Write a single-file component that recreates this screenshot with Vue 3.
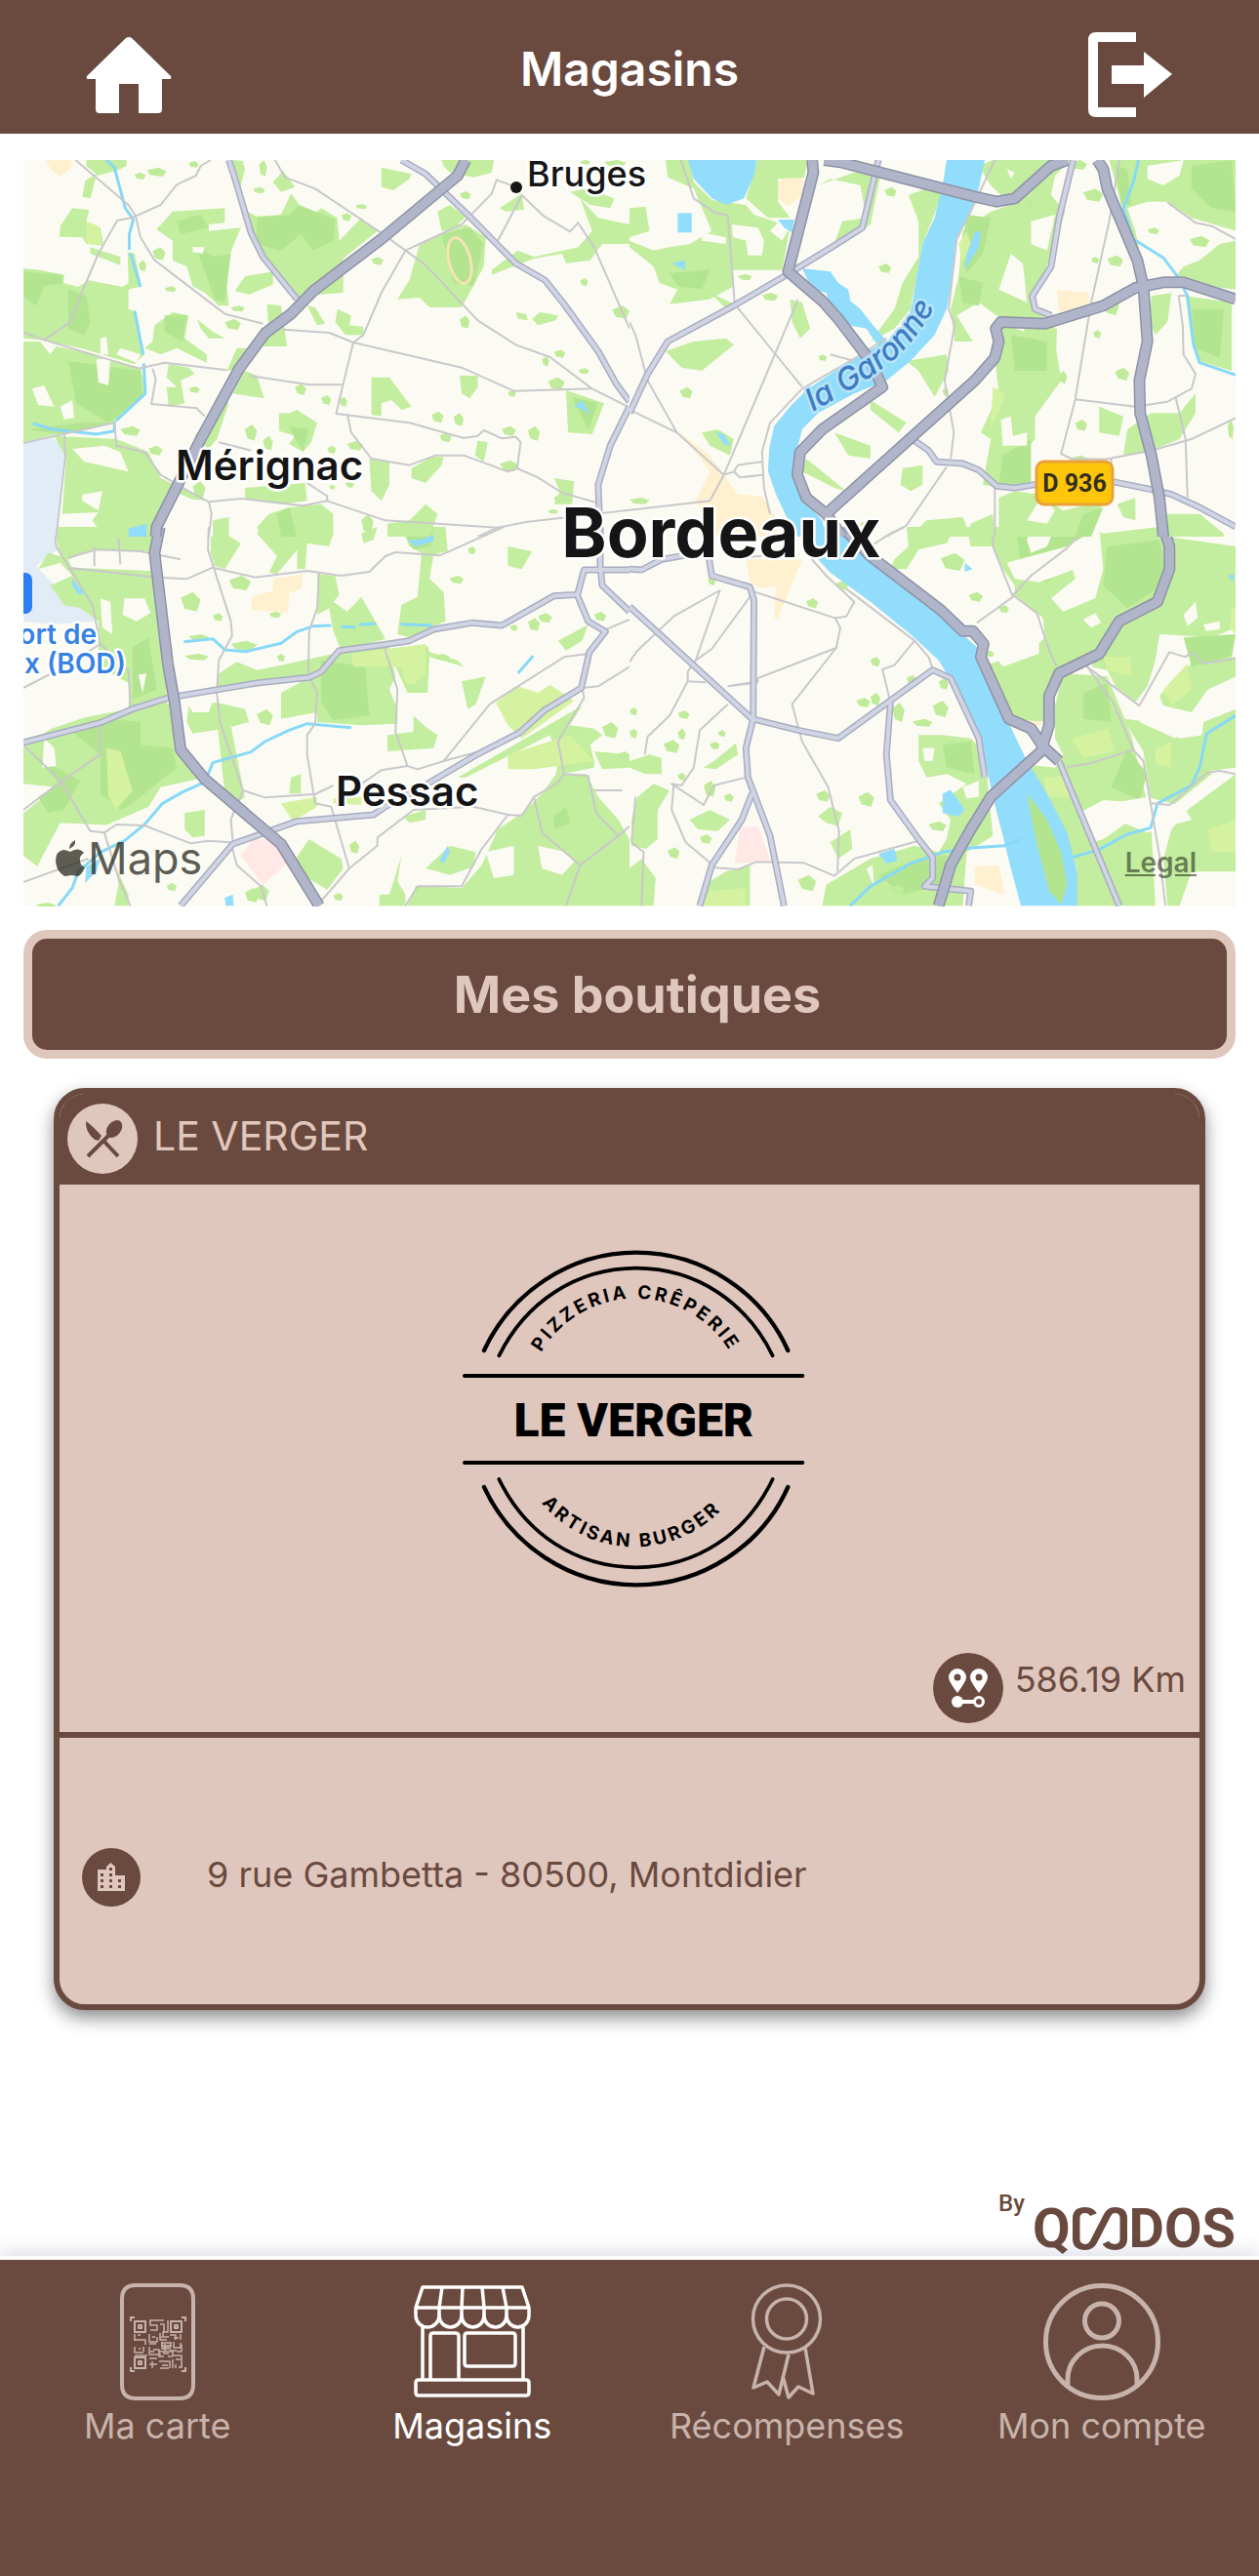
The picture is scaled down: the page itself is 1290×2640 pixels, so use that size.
<template>
  <div class="page">
    <header class="topbar">
      <button type="button" class="iconBtn" aria-label="Accueil">
        <svg viewBox="0 0 88 78" width="88" height="78">
          <path fill="#fff" d="M41 1Q44-1 47 1L87 40Q88 43 86 43H78V74Q78 78 74 78H54V48H34V78H14Q10 78 10 74V43H2Q0 43 1 40Z" />
        </svg>
      </button>
      <h1>Magasins</h1>
      <button type="button" class="iconBtn" aria-label="Déconnexion">
        <svg viewBox="0 0 88 88" width="88" height="88">
          <path fill="#fff" d="M50 0V10H11V77H50V87H9Q1 87 1 79V8Q1 0 9 0ZM25 34H58V20L87 43L58 67V53H25Z" />
        </svg>
      </button>
    </header>

    <main>
      <section class="map" aria-label="Carte">
        <svg class="mapDrawing" viewBox="24 164 1242 765">
          <rect x="24" y="164" width="1242" height="765" fill="#fcfbf3" />
          <svg
            v-for="tile in tiles"
            :key="tile.id"
            :x="tile.x"
            :y="tile.y"
            width="645"
            height="400"
            viewBox="0 0 1568 1200"
            preserveAspectRatio="none"
          >
            <polygon v-for="p in tile.yellow" :key="p" :points="p" fill="#fff0cf" />
            <polygon v-for="p in tile.pink" :key="p" :points="p" fill="#ffe8e6" />
            <polygon v-for="p in tile.airport" :key="p" :points="p" fill="#e2ecf7" />
            <polygon v-for="p in tile.green" :key="p" :points="p" fill="#c3ed9f" />
            <polygon v-for="p in tile.dark" :key="p" :points="p" fill="#b3e590" />
            <path :d="bushes(tile.bushes)" class="bush" />
            <polygon v-for="p in tile.lime" :key="p" :points="p" fill="#d4f2a0" />
            <polygon v-for="p in tile.holes" :key="p" :points="p" fill="#fcfbf3" />
            <polygon v-for="p in tile.water" :key="p" :points="p" fill="#92ddfb" />
            <polygon v-for="p in tile.island" :key="p" :points="p" fill="#b3e590" />
            <path v-for="d in tile.streams" :key="d" :d="d" class="line stream" />
            <path v-for="d in tile.minor" :key="d" :d="d" class="line minor" />
            <path v-for="d in tile.medium" :key="'c' + d" :d="d" class="line mediumCase" />
            <path v-for="d in tile.medium" :key="d" :d="d" class="line medium" />
            <path v-for="d in tile.major" :key="'c' + d" :d="d" class="line majorCase" />
            <path v-for="d in tile.major" :key="d" :d="d" class="line major" />
          </svg>

          <ellipse cx="471" cy="267" rx="11" ry="24" class="track" transform="rotate(-14 471 267)" />
          <circle cx="529" cy="192" r="6" fill="#151515" />
          <rect x="10" y="587" width="23" height="42" rx="7" fill="#2c7ff0" />
          <rect x="1062" y="473" width="78" height="44" rx="8" class="shield" />
          <text x="1101" y="504" class="shieldText">D 936</text>
          <path id="garonne" d="M833 422Q900 385 925 360T970 288" fill="none" />
          <text class="label river"><textPath href="#garonne">la Garonne</textPath></text>
          <text x="540" y="191" class="label village">Bruges</text>
          <text x="180" y="492" class="label town">Mérignac</text>
          <text x="344" y="826" class="label town">Pessac</text>
          <text x="739" y="571" class="label city">Bordeaux</text>
          <text x="99" y="660" class="label airportName">ort de</text>
          <text x="129" y="690" class="label airportName">x (BOD)</text>
        </svg>
        <span class="mapBrand">
          <svg viewBox="0 0 32 38" width="32" height="38">
            <path fill="currentColor" d="M21 0Q22 6 15 9Q15 3 21 0ZM16 12Q20 9 24 9.500Q28 10 30 13Q25 16 26 21Q26 26 31 28Q27 37 23 37Q20 36 16 36Q13 37 10 37Q2 32 1 22Q1 11 9 10Q12 10 16 12Z" />
          </svg>
          Maps
        </span>
        <a class="legal" href="#legal">Legal</a>
      </section>

      <button type="button" class="shopsBtn">Mes boutiques</button>

      <article class="shop">
        <div class="shopHead">
          <span class="badge light">
            <svg viewBox="0 0 72 72" width="72" height="72">
              <path fill="#6a4a3e" d="M19 18Q26 23 35 33L32 38L28 37Q18 29 19 18Z" />
              <ellipse cx="48" cy="26" rx="7" ry="10" fill="#6a4a3e" transform="rotate(38 48 26)" />
              <path d="M42 33L21 54M37 38L52 54" stroke="#6a4a3e" stroke-width="4" />
            </svg>
          </span>
          <h2>LE VERGER</h2>
        </div>

        <div class="shopMedia">
          <svg class="shopLogo" viewBox="0 0 1260 1200" width="420" height="400" role="img" aria-label="Le Verger">
            <g fill="none" stroke="#000" stroke-linecap="round">
              <path stroke-width="13" d="M168 402C250 225 430 101 636 101S1022 225 1102 402M168 822C250 1000 430 1123 636 1123S1022 1000 1102 822" />
              <path stroke-width="11" d="M214 418C295 255 450 149 636 149S975 255 1055 418M214 798C295 965 450 1069 636 1069S975 965 1055 798" />
              <path stroke-width="12" d="M108 480H1147M108 747H1147" />
            </g>
            <path id="arcTop" d="M338 418A337 337 0 0 1 930 418" fill="none" />
            <path id="arcBottom" d="M322 840A370 370 0 0 0 925 860" fill="none" />
            <text class="arcText"><textPath href="#arcTop" startOffset="50%">PIZZERIA CRÊPERIE</textPath></text>
            <text class="arcText"><textPath href="#arcBottom" startOffset="50%">ARTISAN BURGER</textPath></text>
            <text x="628" y="666" class="logoName">LE VERGER</text>
          </svg>
          <p class="distance">
            <span class="badge">
              <svg viewBox="0 0 72 72" width="72" height="72">
                <path fill="#fff" fill-rule="evenodd" d="M25 41Q16 29 16 25A9 9 0 0 1 34 25Q34 29 25 41ZM25 21.500A3.500 3.500 0 1 0 25 28.500A3.500 3.500 0 1 0 25 21.500ZM47 41Q38 29 38 25A9 9 0 0 1 56 25Q56 29 47 41ZM47 21.500A3.500 3.500 0 1 0 47 28.500A3.500 3.500 0 1 0 47 21.500Z" />
                <path d="M25 50H42" stroke="#fff" stroke-width="4" />
                <circle cx="25" cy="50" r="6" fill="#fff" />
                <circle cx="47" cy="50" r="4.500" fill="none" stroke="#fff" stroke-width="3" />
              </svg>
            </span>
            <span>586.19 Km</span>
          </p>
        </div>

        <div class="shopAddress">
          <span class="badge small">
            <svg viewBox="0 0 60 60" width="60" height="60">
              <path fill="#e0c7be" d="M16 44V22H25V19L29.500 15L34 19V28H44V44Z" />
              <path fill="#6a4a3e" d="M19 26h3v3h-3zM28 26h3v3h-3zM28 20h3v3h-3zM19 32h3v3h-3zM28 32h3v3h-3zM37 32h3v3h-3zM19 38h3v3h-3zM28 38h3v3h-3zM37 38h3v3h-3z" />
            </svg>
          </span>
          <address>9 rue Gambetta - 80500, Montdidier</address>
        </div>
      </article>

      <div class="brand">
        <small>By</small>
        <span class="brandName">
          Q<svg viewBox="0 0 60 58" width="56" height="44" preserveAspectRatio="none">
            <path fill="none" stroke="#6a4a3e" stroke-width="8" d="M23 10Q20 4 14 4Q4 4 4 15V43Q4 54 14 54Q20 54 23 47L38 11Q41 4 46 4Q56 4 56 15V43Q56 54 46 54Q40 54 36 48" />
          </svg>DOS
        </span>
      </div>
    </main>

    <nav class="tabs">
      <a v-for="tab in tabs" :key="tab.name" href="#" :class="['tab', { active: tab.active }]">
        <svg viewBox="0 0 120 120" width="120" height="120" fill="none" stroke="currentColor">
          <path v-for="s in tab.strokes" :key="s.d" :d="s.d" :stroke-width="s.w" stroke-linejoin="round" />
        </svg>
        <span>{{ tab.name }}</span>
      </a>
    </nav>
  </div>
</template>

<script setup>
// small clumps of trees, given as "x,y,w,h" boxes
const bushes = (list) =>
  list
    .split(" ")
    .map((b) => {
      const [x, y, w, h] = b.split(",").map(Number);
      return `M${x} ${y + h * 0.3}L${x + w * 0.6} ${y}L${x + w} ${y + h * 0.4}L${x + w * 0.8} ${y + h}L${x + w * 0.2} ${y + h * 0.85}Z`;
    })
    .join("");

const tiles = [
  {
    id: "sw",
    x: 0,
    y: 540,
    yellow: ["680,160 755,145 750,190 720,205 718,265 625,255 628,215 680,195"],
    pink: ["630,960 690,960 720,1030 655,1100 600,1010", "1220,1035 1270,1030 1260,1075 1225,1070"],
    airport: ["58,0 135,0 145,70 90,120 120,160 190,240 235,240 235,290 130,300 58,290"],
    green: [
      "135,0 395,0 375,80 390,160 415,330 415,540 440,560 450,690 510,770 400,800 370,860 240,930 200,950 100,1050 58,1010 58,880 140,800 58,790 58,680 150,600 320,560 320,480 245,430 245,290 200,250 160,240 125,180 180,150 150,110 95,130 120,80 150,90",
      "650,0 800,0 830,20 820,60 765,50 760,130 740,130 740,70 690,145 670,140 690,90 640,20",
      "525,30 560,20 600,50 560,130 535,120 525,80",
      "790,145 835,150 845,210 830,230 865,260 900,215 940,300 960,345 850,380 830,320 820,250 790,270",
      "1000,0 1110,0 1115,75 1080,85 1070,160 1105,200 1110,290 1070,310 1020,340 990,330 1000,240 1040,215 1050,80 1020,60",
      "540,455 590,415 640,440 700,425 850,385 880,390 870,420 780,455 640,485 540,500",
      "700,510 760,470 860,385 970,370 985,460 970,500 990,560 990,605 900,610 790,600 790,570 700,590",
      "470,550 540,540 610,560 620,600 560,620 480,635 465,600",
      "965,640 1030,630 1030,580 1060,615 1090,640 1080,680 965,690",
      "1000,370 1065,365 1070,385 1140,410 1155,430 1070,400 1065,510 1015,510 985,430",
      "1150,475 1210,460 1185,545 1165,560",
      "1390,350 1465,300 1450,350 1410,380",
      "1140,770 1450,550 1390,665 1400,760 1460,760 1490,830 1540,900 1568,960 1568,1165 1015,1165 1035,1105 1150,1110 1200,1040 1240,930 1300,880 1350,820 1385,760 1390,720 1370,640 1160,770",
      "1385,660 1420,610 1480,620 1500,640 1470,670 1480,720 1480,740 1400,760",
      "460,880 510,870 510,950 480,955 460,930",
      "720,1050 770,960 850,1020 855,1050 815,1115 780,1090",
      "1060,1050 1120,980 1185,1000 1180,1045 1120,1070 1090,1060",
      "945,1165 945,1130 970,1130 1000,1010 990,1090 1010,1130 1010,1165",
      "540,590 570,580 610,830 580,860 560,820",
      "1005,890 1060,870 1060,900 1020,910",
      "725,770 750,760 750,820 720,820",
      "290,1050 320,1130 320,1165 285,1165 295,1100",
      "1480,690 1568,700 1568,740 1500,745",
      "1265,60 1325,75 1300,130 1265,120",
      "900,20 940,0 930,40 905,50",
    ],
    dark: [
      "270,590 350,600 350,670 430,680 440,740 330,850 300,870 250,820 250,700 170,620",
      "80,700 200,780 160,870 120,880 95,830 150,790",
      "800,410 910,430 920,580 830,595 800,540",
      "1380,890 1410,860 1420,910 1380,930",
      "1000,0 1080,0 1070,60 1030,70",
      "330,370 370,340 390,500 330,530",
    ],
    bushes:
      "570,150,55,45 530,265,25,25 670,260,30,20 690,390,20,25 640,560,40,50 575,350,65,30 460,390,60,20 1315,280,30,40 1340,265,35,30 1480,260,30,30 1120,150,35,25 1165,60,20,25 1500,600,40,50 1080,390,40,20 610,1110,35,45 630,1100,40,50 90,1155,50,20 415,1095,25,25 830,1125,25,25 870,965,25,40 1270,300,20,20 1540,690,28,25 450,200,50,60 470,330,50,20",
    lime: [
      "1235,540 1290,490 1340,510 1370,485 1430,535 1300,650 1265,610",
      "1265,700 1420,640 1480,720 1330,745 1265,745",
      "700,850 790,830 790,860 730,905",
      "875,390 1060,360 1060,450 1030,485 1010,480 1000,430 880,430",
      "265,680 300,690 330,810 290,870 270,830",
      "830,835 900,830 900,855 830,850",
    ],
    holes: [
      "235,70 380,75 375,135 180,125 170,100",
      "250,220 275,230 280,330 255,310",
      "310,220 360,220 375,265 340,290 305,270",
      "345,455 365,450 355,510",
      "435,430 540,470 540,500 520,570 480,570 455,520 430,470",
      "110,650 135,680 140,735 105,740",
      "58,440 230,440 320,480 320,540 58,650",
      "1340,980 1410,1000 1430,1030 1400,1070 1350,1050",
      "1210,1000 1280,980 1280,1070 1230,1080",
      "150,910 330,920 320,960 270,1080 180,1090 90,1050",
    ],
    water: [
      "325,0 370,0 365,30 325,20",
      "180,160 210,205 195,208 180,180",
      "1015,40 1045,40 1080,25 1080,45 1035,60",
      "215,1045 250,1020 240,1060 212,1095",
      "1095,1025 1115,980 1120,1000 1105,1035",
      "560,1140 580,1130 582,1165 562,1165",
    ],
    island: [],
    streams: [
      "M145 1165L180 1110L195 1060L250 1000L310 965L360 915L405 850L455 815L510 785L530 725L625 692L660 660L720 625L765 605L875 617",
      "M458 353L530 344L560 378L613 383L700 358L740 322L780 305L825 303",
      "M850 307L885 308M895 300L935 298M998 299L1075 303M1290 450L1328 397",
    ],
    minor: [
      "M170 125L390 155L465 160L530 125L635 155L765 135L850 150L920 138L960 90L985 78L1095 88L1255 0",
      "M520 0L518 70L575 290L578 335L545 410L540 510L548 600L605 810L660 832L780 822",
      "M135 0L140 60L170 120L230 240L250 360L320 440L325 555",
      "M795 140L790 250L770 320L768 455L790 510L785 605L765 640L765 700L785 850L825 860L870 1050",
      "M955 360L990 500L985 630L1015 735L950 748L900 790M1015 735L1040 745L1105 720L1195 690",
      "M1105 720L1220 545L1405 400L1465 390",
      "M58 670L150 780L225 935L260 940L290 915L360 918L475 973L520 965L575 970",
      "M58 870L150 785L250 700L250 610M58 1092L220 1020M260 940L295 1080L325 1165",
      "M58 495L160 430L250 360M170 95L240 70L350 75L450 100M235 60V120M295 35L300 115",
      "M575 970L590 1040L650 1105L665 1165M605 810L575 900L580 970",
      "M800 1150L870 1050L940 980L940 955L1030 870L1180 860L1265 885L1200 990L1150 1105L1040 1105L1010 1165",
      "M1265 885L1300 888L1330 830L1385 790L1405 760L1465 765L1485 880L1540 950L1445 1040L1410 1165",
      "M1445 1040L1350 940L1330 830M1450 495L1455 525L1390 660L1405 760M1480 810H1550",
      "M1450 495L1490 490L1568 430M1500 320L1568 285M1540 950L1568 920M780 825L830 795",
    ],
    medium: [
      "M58 663L250 602L330 560L420 525L640 480L770 463L800 445L845 380L955 362L1020 350L1080 315L1175 295L1250 303L1380 212L1440 208",
      "M1568 132H1455L1438 210L1465 290L1508 322L1468 385L1448 495L1355 565L1295 632L1185 702L1065 790L960 860L930 885L740 905L580 975L450 1165",
      "M1495 0V120L1500 180L1568 260",
    ],
    major: ["M398 0L385 80L418 420L435 540L450 685L510 775L700 975L795 1165"],
  },
  {
    id: "se",
    x: 645,
    y: 540,
    yellow: [
      "290,100 430,100 400,190 370,280 360,280 365,180 330,190 300,170",
      "940,520 1000,512 1025,610 980,610",
      "860,1045 920,1040 935,1130 860,1100",
    ],
    pink: ["275,925 320,920 350,1025 262,1035"],
    airport: [],
    green: [
      "690,0 810,0 790,50 720,70 690,130 650,130 660,100 695,60",
      "840,0 1140,0 1180,20 1320,0 1340,100 1330,200 1220,290 1150,400 1060,450 1050,600 940,590 870,400 900,420 1000,380 1035,340 1030,280 960,210 960,180 930,130 905,60 850,60",
      "1340,30 1510,60 1510,310 1450,340 1320,330 1310,410 1290,490 1260,540 1210,490 1190,440 1150,430 1230,280 1340,200",
      "1080,450 1190,460 1250,640 1290,850 1180,840 1120,880 1060,740 1080,700 1060,650 1060,550",
      "1230,590 1300,600 1370,650 1430,640 1450,760 1350,860 1300,850 1280,690",
      "1320,520 1400,420 1510,400 1510,460 1440,500 1400,570 1330,550",
      "1430,600 1510,560 1510,740 1440,750 1420,700",
      "720,640 780,640 850,650 880,690 890,760 905,950 840,1000 830,1165 600,1165 480,1165 490,1100 600,1020 710,980 770,1000 790,960 800,900 770,850 840,790 790,760 740,770 720,720",
      "980,730 1060,740 1120,880 1200,1080 1210,1165 1110,1165 1115,1050 1060,870",
      "1330,1020 1350,930 1390,870 1510,760 1510,1060 1400,1060 1370,1165 1340,1165",
      "1100,990 1180,960 1250,900 1300,930 1310,1165 1215,1165 1150,1080",
      "0,720 50,700 80,710 80,760 40,760 0,740",
      "20,830 60,790 100,810 70,870 70,960 40,990 5,980 5,900",
      "150,900 200,870 250,900 220,935 170,930",
      "210,720 265,665 270,700 215,745 185,740",
      "470,890 500,860 530,880 520,920 490,910",
      "200,1090 240,1060 300,1040 300,1165 180,1165",
      "0,1050 30,1020 65,1080 60,1165 0,1165",
      "500,970 550,930 555,990 520,1020",
    ],
    dark: [
      "960,0 1140,0 1100,100 1040,170 980,150",
      "1190,60 1320,40 1340,170 1240,250 1180,180",
      "1380,340 1510,330 1500,400 1400,430",
      "780,670 850,660 860,760 790,740",
      "1240,680 1290,760 1270,840 1200,800",
      "620,1070 720,1020 790,1010 780,1100 680,1130",
      "1130,510 1190,480 1200,600 1130,590",
    ],
    bushes:
      "600,400,25,30 565,525,35,30 600,510,25,40 655,540,30,60 755,535,40,50 690,455,25,30 440,220,30,30 515,165,30,30 775,80,60,55 845,200,35,30 920,240,25,25 195,150,20,30 120,565,30,25 120,620,20,35 85,655,40,40 200,660,25,25 220,625,20,20 0,620,20,30 0,555,20,25 185,780,30,50 235,820,25,25 175,945,30,30 95,985,30,35 465,810,35,35 570,815,40,45 745,905,45,30 705,590,50,25 770,465,25,35 420,1070,45,50 120,755,20,25 650,1100,35,30 880,380,30,20",
    lime: [
      "1100,650 1190,620 1210,690 1130,710",
      "1030,770 1090,765 1100,830 1040,830",
      "1180,400 1250,400 1250,460 1190,440",
      "1330,500 1390,420 1400,500 1350,550",
      "1440,930 1510,900 1510,1000 1450,1000",
      "1310,680 1350,660 1350,740 1310,730",
      "200,1120 290,1110 290,1165 180,1165",
      "1500,250 1510,250 1510,330 1495,310",
    ],
    holes: [
      "1000,0 1060,0 1040,60 1000,80 990,40",
      "1090,60 1170,0 1180,130 1160,220 1080,260 1050,220 1110,160",
      "940,110 1000,90 1090,60 1110,130 1020,170 960,160",
      "1310,560 1370,560 1390,620 1360,650 1270,600",
      "1380,270 1410,230 1415,280 1390,305",
      "1430,300 1470,290 1470,315 1435,320",
      "905,390 960,340 1020,350 1020,390 930,430",
      "1130,285 1160,265 1175,295 1150,310",
      "945,280 965,265 975,290 955,302",
      "1200,850 1290,830 1380,860 1400,900 1290,940 1210,900 1140,930 1120,900",
      "730,680 760,680 755,720 735,720",
      "830,800 870,780 870,830 840,835",
      "1440,520 1500,465 1510,470 1440,560 1415,575",
      "590,1050 605,1040 610,1110",
    ],
    water: [
      "425,0 530,0 600,110 700,190 830,330 865,370 870,400 940,590 990,720 1040,820 1090,940 1115,1060 1115,1165 975,1165 950,1050 930,950 905,830 880,680 830,530 770,410 700,330 600,230 500,140 440,60",
      "780,820 800,808 835,870 820,890 780,880",
      "620,1005 660,990 668,1025 640,1035",
      "835,110 855,130 835,138",
      "1490,150 1505,145 1505,170",
    ],
    island: ["990,820 1040,900 1075,1000 1090,1100 1075,1160 1045,1120 1010,950"],
    streams: [
      "M550 1165L600 1105L700 1035L780 1000L850 987L935 980L975 960",
      "M1105 1015L1170 992L1240 945L1298 925L1315 850L1400 795L1420 740L1438 635L1510 580",
    ],
    minor: [
      "M0 415L20 380L110 275L225 195L165 410L205 375L300 215M165 410L145 445L145 475L100 580L45 645L38 700",
      "M145 475L190 478M245 490L320 475L320 465L515 372L525 310L512 280L540 275L560 230L490 150L430 65",
      "M300 195L512 280M515 372L405 545L430 660L495 800L522 935L518 1060",
      "M245 490L320 478M245 545L175 625L160 740L130 795L105 790L185 855L210 795L290 770",
      "M110 795L105 870L140 970L215 1048L270 1053L315 1030L435 1033L510 1073L560 1020L720 965",
      "M15 830L5 970L35 1000L30 1165M710 350L660 425L630 438L650 540",
      "M540 190L710 350L745 400L755 435M865 295L955 215L905 60V0M955 210L1015 265L1045 380L1065 430",
      "M955 210L1000 150L1090 65L1140 0M1090 738L1145 728L1255 685L1205 540L1140 430L1270 550L1345 385L1385 400L1400 385L1430 420L1510 405",
      "M1255 685L1280 720L1320 1010L1335 1165M1300 850L1345 855L1440 755L1470 750L1510 760M600 60L650 20L685 0",
      "M280 95L400 80",
    ],
    medium: [
      "M0 130L30 132L80 100L195 75M195 75L205 150L300 185L310 225L308 590L290 680L295 770L350 950L385 1165",
      "M0 245L305 590L420 625L520 650L755 440L800 465L870 650L885 770",
      "M650 540L640 700L650 840L720 960L755 1015L755 1080L735 1105L850 1120L845 1165",
      "M305 820L280 900L205 1040L175 1165M1070 720L1100 810L1220 1165",
    ],
    major: [
      "M530 0L600 90L775 255L830 320H855L882 360L875 400L945 590L1000 620L1030 675L1070 720",
      "M1330 0L1345 60L1345 130L1315 230L1220 290L1170 390L1070 450L1045 520V610L1025 690L900 830L850 930L800 1040L770 1165",
    ],
  },
  {
    id: "nw",
    x: 0,
    y: 150,
    yellow: ["115,42 180,42 175,70 150,92 125,70"],
    pink: [],
    airport: ["58,912 130,895 165,940 140,1200 58,1200"],
    green: [
      "215,42 315,42 315,60 290,75 240,90 225,160 205,155 212,105 240,85 215,60",
      "180,190 222,195 215,230 250,250 258,305 215,300 205,280 148,278 150,245",
      "58,375 100,380 160,395 158,420 195,432 220,412 305,432 320,420 318,325 335,330 352,430 320,440 320,500 340,510 352,600 360,640 335,670 200,620 100,595 58,590",
      "58,600 100,600 125,640 140,615 200,630 350,680 365,760 290,845 140,885 58,910",
      "390,255 430,200 560,190 560,235 520,240 520,260 600,250 560,370 570,490 545,490 510,450 480,430 465,370 430,350 430,290",
      "600,190 640,215 700,210 725,145 745,180 740,215 780,210 800,190 840,220 845,290 900,220 940,260 855,345 855,450 800,455 735,465 690,400 650,320",
      "580,42 605,45 610,70 600,120 585,110",
      "385,550 430,510 470,520 460,590 515,640 515,665 440,620 400,640 360,620 380,600",
      "490,530 530,570 560,590 520,590 500,560",
      "840,500 875,520 870,550 905,555 905,580 860,580 835,540",
      "765,490 785,495 810,545 790,550",
      "665,485 700,490 715,615 640,615 670,580",
      "610,690 640,705 658,775 580,760",
      "590,620 640,620 610,680 565,690",
      "545,780 570,790 540,900 520,930 485,890 510,850",
      "420,670 470,680 485,700 450,720 460,790 420,800 415,740 440,740 415,710",
      "950,65 1025,85 1020,100 980,135 950,125",
      "680,110 705,75 735,125 700,140",
      "610,400 680,385 680,425 620,455 585,445",
      "1045,300 1160,240 1210,280 1205,370 1150,495 1070,495 1045,465 990,470 1020,410",
      "1090,200 1120,180 1160,215 1130,255 1100,260",
      "1100,42 1230,42 1225,80 1180,95 1120,80 1105,60",
      "1445,160 1490,220 1568,240 1568,300 1500,300 1470,350 1410,360 1400,330 1330,345 1225,395 1225,380 1290,320 1330,340 1440,310 1475,260",
      "1420,140 1460,130 1530,160 1520,190 1470,180",
      "1285,510 1310,515 1315,535 1290,530",
      "1325,530 1345,510 1390,520 1385,535 1340,550",
      "925,710 970,710 1000,760 1025,800 1000,810 975,780 950,790 950,830 925,825",
      "1145,705 1190,705 1190,740 1170,775 1150,760",
      "1410,750 1505,790 1475,885 1415,880",
      "695,820 720,820 740,810 790,850 775,910 755,940 720,915 735,890 695,875",
      "920,960 970,970 970,1040 950,1090 925,1060",
      "1025,990 1075,955 1105,955 1100,980 1060,1035 1025,1020",
      "1190,905 1215,910 1205,970 1183,950",
      "1380,1020 1430,1030 1425,1100 1380,1100 1395,1060",
      "610,1050 760,1035 765,1090 700,1100 610,1085",
      "135,890 290,900 370,940 400,1020 520,1090 480,1085 430,1060 385,1200 260,1200 230,1150 245,1125 155,1130 165,960",
      "720,1110 800,1100 830,1130 830,1200 650,1200 640,1170 670,1130",
      "530,1150 570,1140 570,1200 530,1200",
      "965,1160 1020,1150 1060,1100 1090,1130 1070,1200 965,1200",
      "1245,190 1300,145 1305,195 1260,200",
      "225,310 300,340 300,365 225,330",
    ],
    dark: [
      "58,385 155,395 155,420 110,430 90,490 58,460",
      "170,440 215,460 225,540 210,580 170,560",
      "170,660 350,690 355,770 270,850 190,790",
      "485,300 530,340 575,330 560,480 535,470",
      "640,220 720,210 745,180 835,225 830,290 780,320 750,270 700,320 640,300",
      "1100,270 1170,250 1205,300 1180,430 1130,420",
      "440,230 500,210 520,250 450,270",
      "410,520 465,520 455,600 410,570",
      "720,860 770,870 755,935 735,900",
      "1425,770 1490,790 1465,870",
      "690,1130 720,1110 740,1200 700,1200",
      "70,870 200,850 285,850 150,885",
    ],
    bushes:
      "365,65,50,28 335,80,28,22 470,45,25,20 645,42,20,50 630,125,30,20 885,178,30,15 850,205,25,25 925,340,30,25 410,430,30,18 380,310,32,40 470,738,28,20 610,855,30,50 655,890,25,45 735,730,28,35 800,765,25,30 845,770,20,30 865,905,40,30 1075,815,30,35 1130,820,25,40 1095,880,30,30 1250,860,35,30 1315,860,30,45 1245,965,45,35 1380,625,28,25 1350,645,18,32 1440,682,28,18 1365,710,42,38 1445,405,20,25 1525,490,43,40 1145,520,25,40 560,530,40,35 575,490,35,18 300,860,50,30 370,920,35,30 480,1030,32,50 815,920,22,25 1145,138,28,25 1445,42,25,14 1505,42,55,20 820,1040,15,15 860,1030,22,20 1380,1072,20,25 1265,750,20,20 345,350,20,35 900,1130,30,60 1365,1115,25,15",
    lime: ["215,230 245,245 255,300 215,300"],
    holes: [
      "80,745 110,735 135,800 95,795",
      "150,800 180,780 185,835 160,840",
      "240,655 275,650 270,735 245,725",
      "585,370 620,355 640,390 580,405",
      "205,1070 255,1060 245,1120 205,1090",
      "250,590 265,585 270,640 250,640",
      "300,620 350,640 340,665 290,640",
      "900,215 950,250 910,230",
      "480,310 510,310 505,330 480,325",
      "180,930 260,920 300,940 320,1000 210,970",
    ],
    water: ["320,1175 365,1160 365,1200 320,1200", "1430,800 1450,780 1470,825 1445,805"],
    island: [],
    streams: [
      "M265 42L285 65L312 190L332 225L322 270V318M325 328L350 432M335 505L357 640M358 668L362 760L290 843",
      "M82 852L130 870L240 885L285 875V845",
    ],
    minor: [
      "M188 42L320 180L338 215L350 280L385 350L560 515L655 545M705 563L820 573L880 603L1150 680L1280 752L1475 745",
      "M525 42L500 60L488 90L440 118L400 180L332 218L292 228L245 330L200 460L175 540L110 595M58 572L110 595L345 683L410 665L565 688M620 705L770 733H853",
      "M685 42L710 95L785 130L940 258L1010 320L1060 365L1190 535L1285 610L1370 648L1475 745L1568 803",
      "M1285 125L1237 103L1225 145L1150 240L1010 320L950 450L905 580L880 603L837 822L1020 850L1155 897L1190 890L1205 873L1250 898L1285 893L1297 910L1288 990L1265 1000L1155 950H1085L1020 980L925 960L875 880L865 822",
      "M1288 990L1340 1018L1400 1065L1485 1095M1300 150L1355 215L1420 262L1440 235L1480 310L1568 560M1240 290L1300 150",
      "M380 683L388 715L377 792L490 805L510 830M545 910L625 935M58 912L285 850L290 920L360 940L400 1010L470 1060L520 1093L600 1083L755 1105L815 1090L960 1150L1240 1172L1310 1155L1568 1118",
      "M160 885L163 950L140 1200M520 1093L527 1130L520 1200M815 1090V1075L765 1035M1240 1172L1190 1200",
    ],
    medium: [
      "M570 42L583 90L625 265L655 340L740 470",
      "M1000 42L1060 85L1165 210L1285 360L1358 412L1405 485L1490 630L1535 730L1568 785M1568 800L1520 920L1490 1040L1495 1200",
    ],
    major: ["M1160 42L1140 90L950 285L780 445L725 515L660 575L595 685L500 900L390 1170L388 1200"],
  },
  {
    id: "ne",
    x: 645,
    y: 150,
    yellow: [
      "370,110 390,85 435,85 430,150 395,185 372,165",
      "1065,440 1145,450 1145,485 1070,510",
      "125,880 200,950 235,1010 270,1070 330,1075 360,1130 370,1200 215,1200 165,1090 200,1000",
    ],
    pink: [],
    airport: [],
    green: [
      "90,42 150,42 160,110 205,165 290,180 310,210 360,230 400,250 380,380 255,380 260,430 200,470 100,485 120,440 75,420 60,370 0,310 0,290 60,320 100,310 150,300 205,260 160,130 95,95",
      "320,42 445,42 435,95 370,100 370,170 400,220 345,220 290,160",
      "0,190 40,185 50,260 0,280",
      "470,120 560,80 625,90 600,240 530,300 510,300 530,230 590,220 575,120 500,100",
      "695,150 780,110 775,160 730,300 700,500 660,560 600,600 660,500 680,420 720,340 720,230",
      "870,60 905,42 1100,42 1060,90 1050,150 1085,200 1060,300 1030,400 1005,490 1060,520 1060,600 1075,720 1010,830 1010,900 960,970 920,1050 880,1040 900,900 875,880 920,760 910,650 925,530 870,480 815,520 855,600 810,600 800,500 820,400 830,260 900,200 950,180 900,120",
      "940,560 1065,560 1060,690 1040,780 950,780 920,700",
      "1195,42 1510,42 1510,260 1400,220 1340,170 1290,170 1240,190 1260,260 1270,320 1230,200",
      "1420,350 1470,300 1510,290 1510,440 1380,420 1360,400 1380,370",
      "1385,460 1500,480 1500,690 1420,660 1400,600",
      "400,470 430,480 450,560 425,590 405,540",
      "180,880 220,870 260,900 250,950 200,920",
      "90,630 160,600 240,590 260,610 180,690 130,680",
      "690,660 790,640 795,690 760,770 720,690",
      "510,880 600,920 600,960 545,950",
      "440,960 540,1060 510,1050 430,1000",
      "600,780 690,850 670,880 600,810",
      "680,990 730,980 730,1040 700,1060 675,1040",
      "1170,800 1230,830 1220,890 1170,880",
      "1240,870 1300,820 1370,820 1410,760 1410,820 1370,900 1290,940 1230,950",
      "960,1060 1020,1070 1080,1120 1180,1090 1150,1200 920,1200 920,1080",
      "1340,1130 1420,1130 1480,1190 1480,1200 1340,1200",
      "740,1150 830,1140 850,1200 700,1200",
      "850,1160 905,1130 910,1200 845,1200",
      "1300,460 1350,450 1340,540 1310,580 1295,540",
      "200,450 270,490 250,510",
      "1215,1100 1260,1080 1260,1150 1230,1140",
    ],
    dark: [
      "1400,60 1500,42 1510,200 1450,190 1400,130",
      "840,210 900,220 880,330 840,390 825,330",
      "950,580 1040,600 1040,690 960,690",
      "1400,500 1480,500 1470,650 1410,620",
      "1210,60 1240,70 1250,180 1225,180",
      "930,950 1000,900 1000,1040 920,1040",
      "1130,1130 1180,1110 1150,1200 1110,1200",
      "100,390 200,380 180,440 120,430",
      "820,400 880,420 870,490 830,480",
    ],
    bushes:
      "635,125,30,30 620,360,32,30 270,392,35,20 330,450,40,25 470,640,22,20 125,740,32,35 985,165,20,25 1095,42,45,30 1130,130,50,40 1190,335,40,35 1155,565,20,25 1210,680,35,40 1110,840,30,35 1095,950,50,30 1395,275,50,35 0,1080,50,20 575,1150,30,30 1290,250,30,20 1150,340,20,20 1180,460,40,60 1260,860,20,30 1490,840,15,60 1070,690,20,40 780,740,15,30",
    lime: ["905,740 935,760 920,820 900,860", "820,300 840,260 850,300 830,360"],
    holes: [
      "255,240 320,250 335,290 330,335 295,335 290,290 258,280",
      "180,265 240,280 240,300 180,290",
      "925,840 950,830 955,890 990,880 990,920 930,920",
      "1290,60 1380,42 1370,90 1330,120 1290,100",
      "1030,1070 1060,1120 1040,1160 990,1150",
      "960,560 980,555 985,570",
      "940,70 960,80 950,100",
      "350,260 380,220 400,250 380,290",
      "1000,230 1060,210 1040,320 1000,300",
      "990,480 920,440 950,330 980,360",
    ],
    water: [
      "790,42 885,42 870,130 850,200 815,280 805,400 790,500 760,580 700,660 640,720 560,760 470,820 430,870 420,920 405,1000 420,1060 450,1110 480,1150 490,1200 420,1200 395,1150 365,1070 345,1000 348,930 360,860 400,800 440,750 560,650 640,600 690,550 705,480 715,400 730,300 760,220 780,120",
      "145,42 318,42 310,90 285,160 240,180 205,160 160,100",
      "430,375 500,385 520,420 545,440 550,475 575,500 600,540 645,605 620,615 590,560 545,550 500,490 490,450 455,440",
      "120,205 155,205 155,265 120,265",
      "370,225 410,225 405,265 385,250",
      "105,360 138,350 138,380",
      "860,265 875,260 870,310 835,380 840,330",
      "215,880 235,885 253,920 235,915",
    ],
    island: [],
    streams: [
      "M1268 42L1255 110L1230 190L1255 285L1330 343L1365 400L1390 460L1405 610L1420 665L1510 703",
    ],
    minor: [
      "M128 42L160 160L215 205L245 212L262 485L430 740M0 540L15 580L45 720L118 880M0 810L118 880L235 1010L420 470M262 485L250 490",
      "M235 1010L200 1090L0 1118M235 1010L260 1000L270 980L330 970M260 1000L275 1018L330 1010M350 1130L335 1050L330 940L350 850L430 745L570 645L640 590",
      "M910 42L880 120L850 200L815 285L795 500L810 550L785 720L808 880L800 960M790 985L690 1165L640 1200",
      "M1220 42L1195 230L1150 480L1110 780L1075 945L1100 960L1185 962L1300 935L1400 900L1510 835M1110 778L1260 800L1340 785L1400 745L1410 700L1380 640L1378 550L1368 460L1385 458",
      "M1340 172L1410 235L1450 245L1510 285M1360 770L1385 900L1390 1080M910 1040V1200M1200 960V1020M500 640L560 660",
    ],
    medium: [
      "M0 820L45 700L95 600L260 490L385 400L510 305L580 250L620 42",
      "M1105 42L1070 220L1050 370L1003 460L1010 500L1050 520",
      "M710 905L745 935L765 970L830 975L870 995L915 1045L960 1050L1060 1030L1200 1030L1300 1055L1350 1070L1420 1110L1510 1170",
    ],
    major: [
      "M455 42L458 80L395 385L480 475L520 530L600 660L630 740L480 870L425 940L418 1010L440 1080L490 1130L530 1200",
      "M485 42L530 50L860 155L915 170L960 160L1050 60L1090 42",
      "M1165 42L1180 70L1190 130L1265 350L1280 430L1290 600L1270 720L1272 820L1300 950L1320 1080L1330 1200",
      "M490 1130L860 720L910 650L920 600L912 560L925 540L1035 545L1180 490L1260 435L1330 418H1380L1510 470",
    ],
  },
];

const tabs = [
  {
    name: "Ma carte",
    strokes: [
      { w: 4, d: "M38 2H83Q97 2 97 16V104Q97 118 83 118H38Q24 118 24 104V16Q24 2 38 2Z" },
      // corner marks and code modules
      { w: 2, d: "M33 39V35H37M85 35H89V39M33 86V90H37M85 90H89V86" },
      { w: 2, d: "M37 39H48V50H37ZM74 39H85V50H74ZM37 76H48V87H37ZM41 43H44V46H41ZM78 43H81V46H78ZM41 80H44V83H41Z" },
      {
        w: 1.5,
        d: "M52 38H67M53 38V43H60V48H53M63 42H67V50M71 38V50H66V54M37 52V59M40 53H43M37 58H48V63M52 52V60H60V55M63 51V58H70M73 53H79V58M84 52V58M64 55H72M37 65V71H46M41 67H43M46 65V70M37 74H50M52 62H59M52 65V73H64M56 68H62V76M65 60V65H74V60M68 62V70M77 60V66H84V61M73 69H80M85 63V70H80M66 72H72M76 69V74H85V86M79 78H84M52 77H60M55 80V87M52 83H60M63 75H67M62 80H73V87M65 84H71M63 87H72M76 78V87M79 83V87M82 86H86",
      },
      { w: 1.5, d: "M64 61H74M64 64H74M64 67H74M62 70H76M53 70H57M77 56H82M55 55H58M71 75H76" },
    ],
  },
  {
    name: "Magasins",
    active: true,
    strokes: [
      { w: 3.5, d: "M9 4H111L118 25V33A11.500 12 0 0 1 95 33A11.500 12 0 0 1 72 33A11.500 12 0 0 1 49 33A11.500 12 0 0 1 26 33A12 12 0 0 1 2 33V25Z" },
      { w: 3.5, d: "M2 25H118M29 4L26 25V33M50 4L49 25V33M70 4L72 25V33M91 4L95 25V33" },
      { w: 3.5, d: "M9 45V99M112 45V99M17 99V54Q17 51 20 51H42Q46 51 46 54V99" },
      { w: 3.5, d: "M55 51H101Q104 51 104 54V82Q104 85 101 85H55Q52 85 52 82V54Q52 51 55 51Z" },
      { w: 3.5, d: "M5 99H115Q118 99 118 102V112Q118 115 115 115H5Q2 115 2 112V102Q2 99 5 99Z" },
    ],
  },
  {
    name: "Récompenses",
    strokes: [
      { w: 3.5, d: "M60 2A34.500 34.500 0 1 1 60 71A34.500 34.500 0 1 1 60 2ZM60 16A20.500 20.500 0 1 1 60 57A20.500 20.500 0 1 1 60 16Z" },
      { w: 3.5, d: "M37 65L26 107L40 101L52 114L62 73M56 95L62 117L72 106L87 113L79 66" },
    ],
  },
  {
    name: "Mon compte",
    strokes: [
      { w: 5, d: "M60 2.500A57.500 57.500 0 1 1 60 117.500A57.500 57.500 0 1 1 60 2.500ZM60 21A17.500 17.500 0 1 1 60 56A17.500 17.500 0 1 1 60 21Z" },
      { w: 5, d: "M25 104V98A35.500 34 0 0 1 96 98V104" },
    ],
  },
];
</script>

<style>
body {
  background: #fff;
}
</style>

<style scoped>
.page {
  min-height: 100vh;
  display: flex;
  flex-direction: column;
  font-family: Inter, "Liberation Sans", sans-serif;
  color: #6a4a3e;
}
h1,
h2,
p {
  margin: 0;
}
.topbar {
  height: 137px;
  padding: 16px 88px 0;
  box-sizing: border-box;
  display: flex;
  justify-content: space-between;
  align-items: center;
  background: #6a4a3e;
  color: #fff;
}
.topbar h1 {
  font-size: 48px;
  line-height: 56px;
  font-weight: 600;
  margin-bottom: 12px;
}
.iconBtn {
  border: none;
  background: none;
  padding: 0;
  display: flex;
}
main {
  flex: 1;
  display: flex;
  flex-direction: column;
  padding: 27px 24px 0;
}

/* map */
.map {
  position: relative;
}
.mapDrawing {
  display: block;
  width: 100%;
}
.bush {
  fill: #c0eb9a;
}
.line {
  fill: none;
  vector-effect: non-scaling-stroke;
  stroke-linejoin: round;
}
.stream {
  stroke: #86d9f8;
  stroke-width: 3;
}
.minor {
  stroke: #c9c8cb;
  stroke-width: 2;
}
.mediumCase {
  stroke: #a9adc2;
  stroke-width: 7;
}
.medium {
  stroke: #d0d4e3;
  stroke-width: 4;
}
.majorCase {
  stroke: #8e92a7;
  stroke-width: 12;
}
.major {
  stroke: #b1b5c9;
  stroke-width: 9;
}
.track {
  fill: none;
  stroke: #f6e3b5;
  stroke-width: 3;
}
.label {
  fill: #151515;
  stroke: #fff;
  stroke-width: 5;
  stroke-linejoin: round;
  paint-order: stroke;
  font-weight: 600;
}
.village {
  font-size: 36px;
  font-weight: 500;
}
.town {
  font-size: 42px;
}
.city {
  font-size: 70px;
  font-weight: 700;
  text-anchor: middle;
}
.river {
  font-size: 32px;
  font-style: italic;
  font-weight: 500;
  fill: #3f7cc4;
  stroke: #b5e4f8;
}
.airportName {
  font-size: 28px;
  fill: #3682e4;
  text-anchor: end;
}
.shield {
  fill: #fec50b;
  stroke: #e9a13b;
  stroke-width: 3;
}
.shieldText {
  font: 700 25px Roboto, "Liberation Sans", sans-serif;
  fill: #333020;
  text-anchor: middle;
}
.mapBrand {
  position: absolute;
  left: 32px;
  bottom: 23px;
  display: flex;
  align-items: center;
  gap: 2px;
  font-size: 45px;
  line-height: 52px;
  color: rgba(40, 40, 30, 0.75);
}
.legal {
  position: absolute;
  right: 40px;
  bottom: 29px;
  font-size: 28px;
  line-height: 32px;
  font-weight: 600;
  color: rgba(50, 60, 40, 0.65);
}

.shopsBtn {
  margin-top: 24px;
  height: 132px;
  padding: 0 0 0 16px;
  border: 9px solid #e0c7be;
  border-radius: 24px;
  background: #6a4a3e;
  color: #e0c7be;
  font-family: inherit;
  font-size: 52px;
  font-weight: 700;
}

/* shop card */
.shop {
  margin: 30px 31px 0;
  border: 6px solid #6a4a3e;
  border-radius: 32px;
  overflow: hidden;
  background: #e0c7be;
  box-shadow: 0 8px 18px rgba(0, 0, 0, 0.45);
}
.shopHead {
  display: flex;
  align-items: center;
  gap: 16px;
  height: 93px;
  padding: 0 8px 2px;
  box-sizing: border-box;
  background: #6a4a3e;
  color: #e0c7be;
}
.shopHead h2 {
  padding-bottom: 6px;
  font-size: 41px;
  line-height: 48px;
  font-weight: 400;
}
.badge {
  display: flex;
  flex: none;
  width: 72px;
  height: 72px;
  border-radius: 50%;
  background: #6a4a3e;
}
.badge.light {
  background: #e0c7be;
}
.badge.small {
  width: 60px;
  height: 60px;
}
.shopMedia {
  padding: 36px 14px 9px 24px;
  border-bottom: 6px solid #6a4a3e;
}
.shopLogo {
  display: block;
  margin: 0 auto;
}
.arcText {
  font-size: 57px;
  font-weight: 700;
  letter-spacing: 9px;
  text-anchor: middle;
}
.logoName {
  font: 900 144px Roboto, "Liberation Sans", sans-serif;
  text-anchor: middle;
}
.distance {
  margin-top: 44px;
  display: flex;
  justify-content: flex-end;
  gap: 12px;
  font-size: 36px;
  line-height: 54px;
}
.shopAddress {
  display: flex;
  align-items: center;
  gap: 68px;
  padding: 113px 23px 100px;
}
address {
  padding-bottom: 6px;
  font-size: 36px;
  line-height: 44px;
  font-style: normal;
}

.brand {
  margin-top: auto;
  display: flex;
  justify-content: flex-end;
  align-items: flex-start;
  gap: 8px;
  padding-bottom: 4px;
  font-family: Roboto, "Liberation Sans", sans-serif;
  font-weight: 700;
}
.brand small {
  font-size: 24px;
  line-height: 28px;
  font-weight: 500;
}
.brandName {
  display: flex;
  align-items: center;
  gap: 2px;
  padding-top: 12px;
  font-size: 56px;
  line-height: 56px;
}

.tabs {
  display: flex;
  height: 324px;
  padding-top: 24px;
  box-sizing: border-box;
  background: #6a4a3e;
  box-shadow: 0 -4px 0 #fff, 0 -8px 18px rgba(60, 60, 120, 0.18);
}
.tab {
  flex: 1;
  display: flex;
  flex-direction: column;
  align-items: center;
  gap: 2px;
  color: #c8b3ac;
  font-size: 36px;
  line-height: 48px;
  text-decoration: none;
}
.tab.active {
  color: #fff;
}
</style>
